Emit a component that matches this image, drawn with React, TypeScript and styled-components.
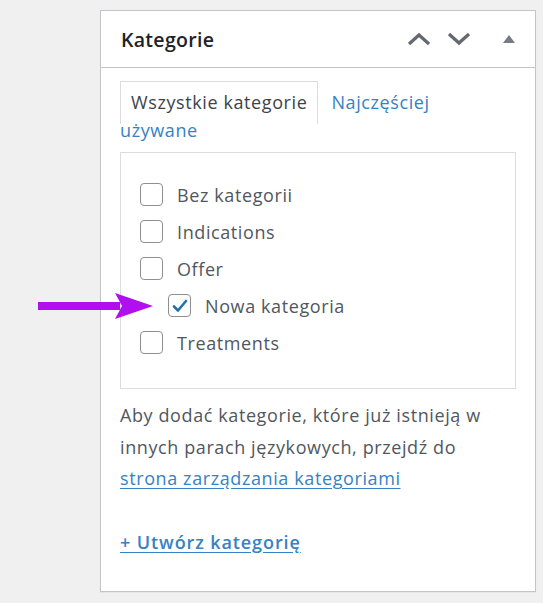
import React from "react";
import styled, { createGlobalStyle } from "styled-components";

const Global = createGlobalStyle`
  html, body { margin: 0; padding: 0; background: #f0f0f1; }
  body { font-family: "Open Sans", "Noto Sans", sans-serif; }
`;

const Page = styled.div`
  position: relative;
  padding: 10px 0 0 100px;
  height: 593px;
  box-sizing: border-box;
`;

const Panel = styled.section`
  width: 436px;
  height: 582px;
  box-sizing: border-box;
  background: #fff;
  border: 1px solid #c3c4c7;
  box-shadow: 0 1px 1px rgba(0, 0, 0, 0.04);
  display: flex;
  flex-direction: column;
`;

const Header = styled.header`
  height: 56px;
  border-bottom: 1px solid #c3c4c7;
  display: flex;
  align-items: center;
  padding: 0 6px 0 20px;
`;

const Title = styled.h2`
  margin: 0;
  flex: 1;
  font-size: 19.5px;
  font-weight: 600;
  color: #1d2327;
  letter-spacing: 0.3px;
`;

const HeaderButtons = styled.div`
  display: flex;
  align-items: center;
`;

const IconButton = styled.span<{ $gap?: number }>`
  display: flex;
  width: 40px;
  height: 30px;
  margin-left: ${(p) => p.$gap ?? 0}px;
  align-items: center;
  justify-content: center;
`;

const Body = styled.div`
  padding: 20px 19px 0 19px;
`;

const Tabs = styled.div`
  width: 385px;
  font-size: 18px;
  letter-spacing: 0.6px;
  line-height: 28px;
`;

const ActiveTab = styled.span`
  padding: 8px 10px 10px;
  border: 1px solid #dcdcde;
  border-bottom: none;
  background: #fff;
  color: #3c434a;
  margin-right: 13px;
`;

const Tab = styled.span`
  color: #3582c4;
`;

const CategoryBox = styled.div`
  margin-top: 8px;
  border: 1px solid #dcdcde;
  height: 237px;
  box-sizing: border-box;
  padding: 23px 19px 0;
`;

const Row = styled.label<{ $level: number }>`
  display: flex;
  align-items: center;
  height: 37px;
  padding-left: ${(p) => p.$level * 28}px;
  gap: 14px;
  font-size: 18px;
  letter-spacing: 0.6px;
  color: #50575e;
`;

const Box = styled.span`
  width: 23px;
  height: 23px;
  box-sizing: border-box;
  border: 1px solid #8c8f94;
  border-radius: 4px;
  background: #fff;
  display: flex;
  align-items: center;
  justify-content: center;
`;

const Note = styled.p`
  margin: 11px 0 0;
  font-size: 18px;
  letter-spacing: 0.6px;
  line-height: 31.5px;
  color: #50575e;
`;

const Link = styled.a`
  color: #3582c4;
  text-decoration: underline;
  text-underline-offset: 3px;
`;

const Create = styled.a`
  display: block;
  margin-top: 31px;
  font-size: 18px;
  letter-spacing: 0.9px;
  line-height: 32px;
  font-weight: 600;
  color: #3582c4;
  text-decoration: underline;
  text-underline-offset: 3px;
`;

const Arrow = styled.svg`
  position: absolute;
  left: 38px;
  top: 292px;
`;

const categories = [
  { name: "Bez kategorii", level: 0, checked: false },
  { name: "Indications", level: 0, checked: false },
  { name: "Offer", level: 0, checked: false },
  { name: "Nowa kategoria", level: 1, checked: true },
  { name: "Treatments", level: 0, checked: false },
];

export default function App() {
  return (
    <Page>
      <Global />
      <Panel>
        <Header>
          <Title>Kategorie</Title>
          <HeaderButtons>
            <IconButton>
              <svg width="24" height="14" viewBox="0 0 24 14">
                <path d="M2 12 L12 3 L22 12" fill="none" stroke="#646970" strokeWidth="3.2" />
              </svg>
            </IconButton>
            <IconButton>
              <svg width="24" height="14" viewBox="0 0 24 14">
                <path d="M2 2 L12 11 L22 2" fill="none" stroke="#646970" strokeWidth="3.2" />
              </svg>
            </IconButton>
            <IconButton $gap={10}>
              <svg width="14" height="10" viewBox="0 0 14 10">
                <path d="M1 9 L7 1 L13 9 Z" fill="#787c82" />
              </svg>
            </IconButton>
          </HeaderButtons>
        </Header>
        <Body>
          <Tabs>
            <ActiveTab>Wszystkie kategorie</ActiveTab>
            <Tab>Najczęściej używane</Tab>
          </Tabs>
          <CategoryBox>
            {categories.map((c) => (
              <Row key={c.name} $level={c.level}>
                <Box>
                  {c.checked && (
                    <svg width="18" height="16" viewBox="0 0 18 16">
                      <path d="M3 8.5 L7 12.5 L15 3" fill="none" stroke="#2271b1" strokeWidth="2.6" strokeLinecap="round" strokeLinejoin="round" />
                    </svg>
                  )}
                </Box>
                {c.name}
              </Row>
            ))}
          </CategoryBox>
          <Note>
            Aby dodać kategorie, które już istnieją w innych parach językowych, przejdź do{" "}
            <Link href="#">strona zarządzania kategoriami</Link>
          </Note>
          <Create href="#">+ Utwórz kategorię</Create>
        </Body>
      </Panel>
      <Arrow width="116" height="28" viewBox="0 0 116 28">
        <rect x="0" y="10" width="82" height="8" fill="#b10ff0" />
        <path d="M77 1 L115 14 L77 27 L84 14 Z" fill="#b10ff0" />
      </Arrow>
    </Page>
  );
}
